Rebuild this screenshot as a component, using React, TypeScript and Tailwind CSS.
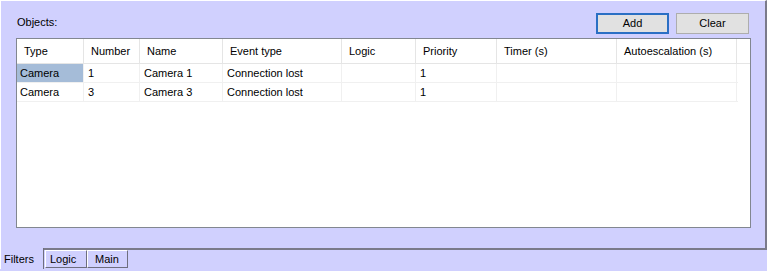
import React from "react";

const columns = [
  { label: "Type", w: "w-[67px]" },
  { label: "Number", w: "w-[56px]" },
  { label: "Name", w: "w-[83px]" },
  { label: "Event type", w: "w-[119px]" },
  { label: "Logic", w: "w-[74px]" },
  { label: "Priority", w: "w-[81px]" },
  { label: "Timer (s)", w: "w-[120px]" },
  { label: "Autoescalation (s)", w: "w-[120px]" },
];

const rows = [
  ["Camera", "1", "Camera 1", "Connection lost", "", "1", "", ""],
  ["Camera", "3", "Camera 3", "Connection lost", "", "1", "", ""],
];

export default function App() {
  return (
    <div
      className="w-[767px] h-[271px] bg-[#d0d0fe] text-[11px] text-black flex flex-col overflow-hidden"
      style={{ fontFamily: '"Liberation Sans", Arial, sans-serif' }}
    >
      {/* Tab page */}
      <div className="h-[250px] w-[767px] border-t border-l border-t-white border-l-white border-r-2 border-b-2 border-r-[#7a7a8a] border-b-[#7a7a8a] flex flex-col">
        <div className="flex items-start h-[37px]">
          <span className="ml-[16px] mt-[15px] leading-[13px]">Objects:</span>
          <div className="ml-auto mr-[16px] mt-[12px] flex gap-[7px]">
            <button className="w-[73px] h-[21px] bg-[#e1e1e1] border-2 border-[#2a6fc4] leading-[17px]">
              Add
            </button>
            <button className="w-[73px] h-[21px] bg-[#e1e1e1] border border-[#adadad] leading-[19px]">
              Clear
            </button>
          </div>
        </div>

        {/* List view */}
        <div className="ml-[15px] w-[735px] h-[190px] bg-white border border-[#828790] overflow-hidden">
          <div className="flex h-[25px] border-b border-[#e5e5e5]">
            {columns.map((c) => (
              <div
                key={c.label}
                className={`${c.w} shrink-0 border-r border-[#e5e5e5] pl-[7px] flex items-center`}
              >
                {c.label}
              </div>
            ))}
          </div>
          {rows.map((r, ri) => (
            <div key={ri} className="flex h-[19px] w-[721px] border-b border-[#f0f0f0]">
              {r.map((cell, ci) => (
                <div
                  key={ci}
                  className={`${columns[ci].w} shrink-0 border-r border-[#f0f0f0] flex items-center ${
                    ri === 0 && ci === 0 ? "bg-[#a5bcd8] pl-[3px]" : ci === 0 ? "pl-[3px]" : "pl-[4px]"
                  }`}
                >
                  {cell}
                </div>
              ))}
            </div>
          ))}
        </div>
      </div>

      {/* Tabs */}
      <div className="flex items-start h-[21px]">
        <div className="w-[44px] h-[21px] -mt-[2px] bg-[#d0d0fe] border-l border-l-white border-r border-r-[#6e6e7e] pl-[3px] pt-[5px] leading-[13px]">
          Filters
        </div>
        <div className="w-[42px] h-[18px] ml-[1px] border-t border-t-white border-l border-l-white border-r border-r-[#6e6e7e] border-b border-b-[#6e6e7e] pl-[4px] pt-[2px] leading-[13px]">
          Logic
        </div>
        <div className="w-[41px] h-[18px] border-t border-t-white border-l border-l-white border-r border-r-[#6e6e7e] border-b border-b-[#6e6e7e] pl-[7px] pt-[2px] leading-[13px]">
          Main
        </div>
      </div>
    </div>
  );
}
